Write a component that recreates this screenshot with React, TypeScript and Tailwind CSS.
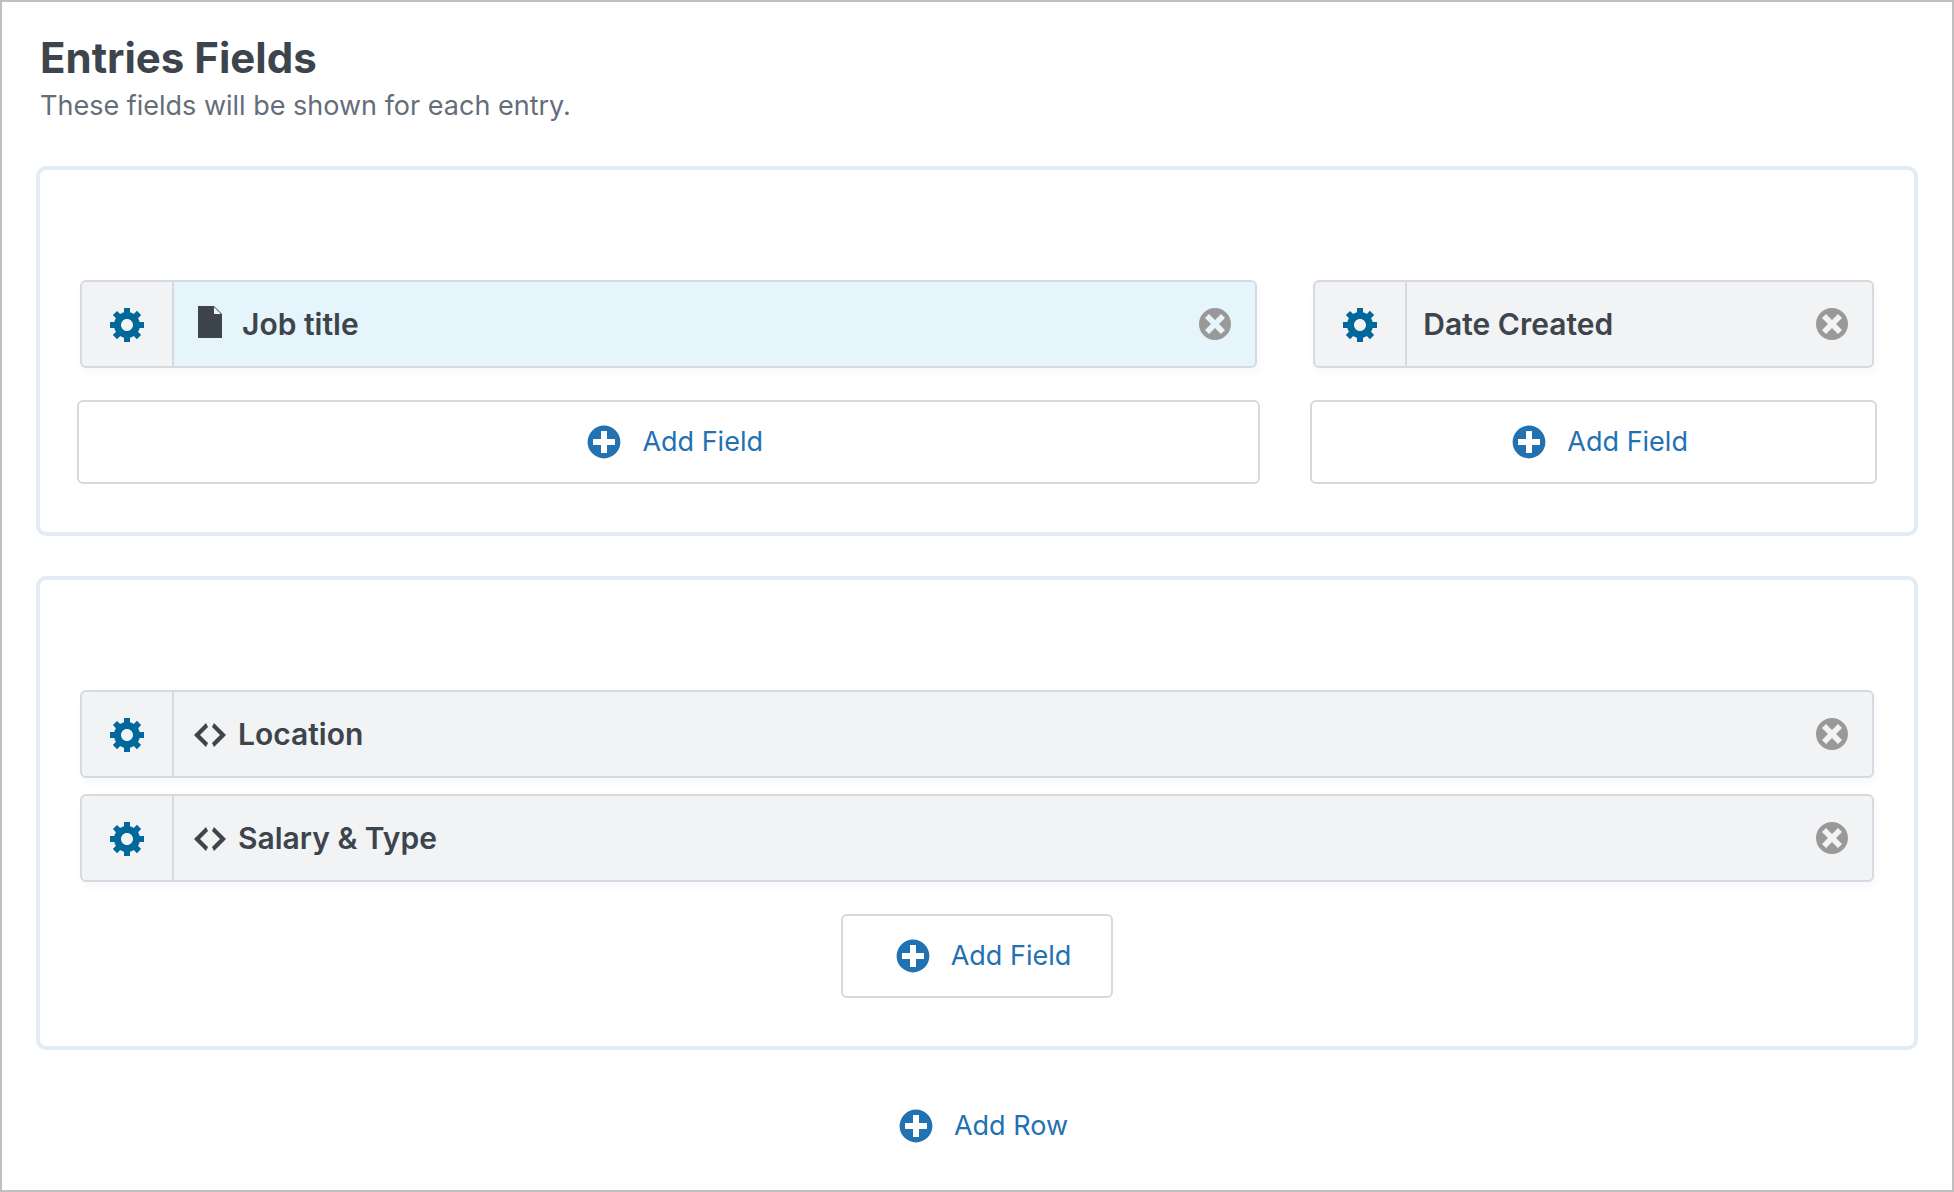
import type { ReactNode } from "react";

type IconName = "gear" | "plus" | "dismiss" | "document" | "code";

type Field = {
  id: string;
  label: string;
  icon?: IconName;
  active?: boolean;
};

const ICONS: Record<IconName, string> = {
  gear: "M18 12h-2.18c-.17.7-.44 1.35-.81 1.93l1.54 1.54-2.1 2.1-1.54-1.54c-.58.36-1.23.63-1.91.79V19H8v-2.18c-.68-.16-1.33-.43-1.91-.79l-1.54 1.54-2.12-2.12 1.54-1.54c-.36-.58-.63-1.23-.79-1.91H1V9.03h2.17c.16-.7.44-1.35.8-1.94L2.43 5.55l2.1-2.1 1.54 1.54c.58-.37 1.24-.64 1.93-.81V2h3v2.18c.68.16 1.33.43 1.91.79l1.54-1.54 2.12 2.12-1.54 1.54c.36.59.64 1.24.8 1.94H18V12zm-8.5 1.5c1.66 0 3-1.34 3-3s-1.34-3-3-3-3 1.34-3 3 1.34 3 3 3z",
  plus: "M15.8 4.2c3.2 3.21 3.2 8.39 0 11.6-3.21 3.2-8.39 3.2-11.6 0C1 12.59 1 7.41 4.2 4.2 7.41 1 12.59 1 15.8 4.2zm-4.3 11.3v-4h4v-3h-4v-4h-3v4h-4v3h4v4h3z",
  dismiss: "M10 2c4.42 0 8 3.58 8 8s-3.58 8-8 8-8-3.58-8-8 3.58-8 8-8zm5 11l-3-3 3-3-2-2-3 3-3-3-2 2 3 3-3 3 2 2 3-3 3 3z",
  document: "M12 2l4 4v12H4V2h8zm0 4h3.5L12 2.5V6z",
  code: "M9 6l-4 4 4 4-1 2-6-6 6-6zm2 8l4-4-4-4 1-2 6 6-6 6z",
};

const HEADER_LEFT: Field[] = [
  { id: "job-title", label: "Job title", icon: "document", active: true },
];

const HEADER_RIGHT: Field[] = [{ id: "date-created", label: "Date Created" }];

const DETAILS: Field[] = [
  { id: "location", label: "Location", icon: "code" },
  { id: "salary", label: "Salary & Type", icon: "code" },
];

function Icon({ name }: { name: IconName }) {
  return (
    <svg viewBox="0 0 20 20" className="size-10 shrink-0 fill-current" aria-hidden="true">
      <path fillRule="evenodd" d={ICONS[name]} />
    </svg>
  );
}

function FieldCard({ field }: { field: Field }) {
  return (
    <li className="flex h-[88px] overflow-hidden rounded-md border-2 border-[#d6d9df] bg-[#f2f3f5] shadow-[2px_4px_8px_rgba(30,60,150,0.04)]">
      <button
        aria-label={`Configure ${field.label}`}
        className="flex w-[92px] shrink-0 items-center justify-center border-r-2 border-[#d6d9df] pl-0.5 text-[#00689b]"
      >
        <Icon name="gear" />
      </button>
      <div
        className={`flex flex-1 items-center pr-5 pl-4 text-[#3d444c] ${field.active ? "bg-[#e6f5fb]" : ""}`}
      >
        {field.icon === "document" && (
          <span className="mr-3 pb-1">
            <Icon name="document" />
          </span>
        )}
        {field.icon === "code" && (
          <span className="mr-2 pt-0.5">
            <Icon name="code" />
          </span>
        )}
        <span className="flex-1 text-[30px] leading-10 font-semibold">{field.label}</span>
        <button aria-label={`Remove ${field.label}`} className="text-[#999]">
          <Icon name="dismiss" />
        </button>
      </div>
    </li>
  );
}

function AddButton({ children, className = "" }: { children: ReactNode; className?: string }) {
  return (
    <button
      className={`flex h-[84px] items-center justify-center gap-[18px] rounded-md pr-10 pl-[50px] text-[27px] text-[#2271b1] ${className}`}
    >
      <Icon name="plus" />
      {children}
    </button>
  );
}

function FieldList({ fields }: { fields: Field[] }) {
  return (
    <ul className="space-y-4 px-[3px]">
      {fields.map(f => (
        <FieldCard key={f.id} field={f} />
      ))}
    </ul>
  );
}

function Row({ children }: { children: ReactNode }) {
  return (
    <section className="flex rounded-[10px] border-4 border-[#e3ecf4] px-3 pt-[110px] pb-12">
      {children}
    </section>
  );
}

export default function App() {
  return (
    <main className="min-h-screen border-2 border-[#bfbfbf] bg-white px-[34px] pt-8 font-['Inter',sans-serif]">
      <header className="mb-10 px-1">
        <h1 className="text-[42px] leading-[48px] font-bold text-[#3d444c]">Entries Fields</h1>
        <p className="pt-1 text-[27px] leading-10 text-[#646e7a]">
          These fields will be shown for each entry.
        </p>
      </header>
      <div className="space-y-10">
        <Row>
          <div className="w-2/3 px-[25px]">
            <FieldList fields={HEADER_LEFT} />
            <AddButton className="mt-8 w-full border-2 border-[#d6d9df]">Add Field</AddButton>
          </div>
          <div className="w-1/3 px-[25px]">
            <FieldList fields={HEADER_RIGHT} />
            <AddButton className="mt-8 w-full border-2 border-[#d6d9df]">Add Field</AddButton>
          </div>
        </Row>
        <Row>
          <div className="w-full px-[25px]">
            <FieldList fields={DETAILS} />
            <AddButton className="mx-auto mt-8 border-2 border-[#d6d9df]">Add Field</AddButton>
          </div>
        </Row>
      </div>
      <AddButton className="mx-auto mt-[34px]">Add Row</AddButton>
    </main>
  );
}
